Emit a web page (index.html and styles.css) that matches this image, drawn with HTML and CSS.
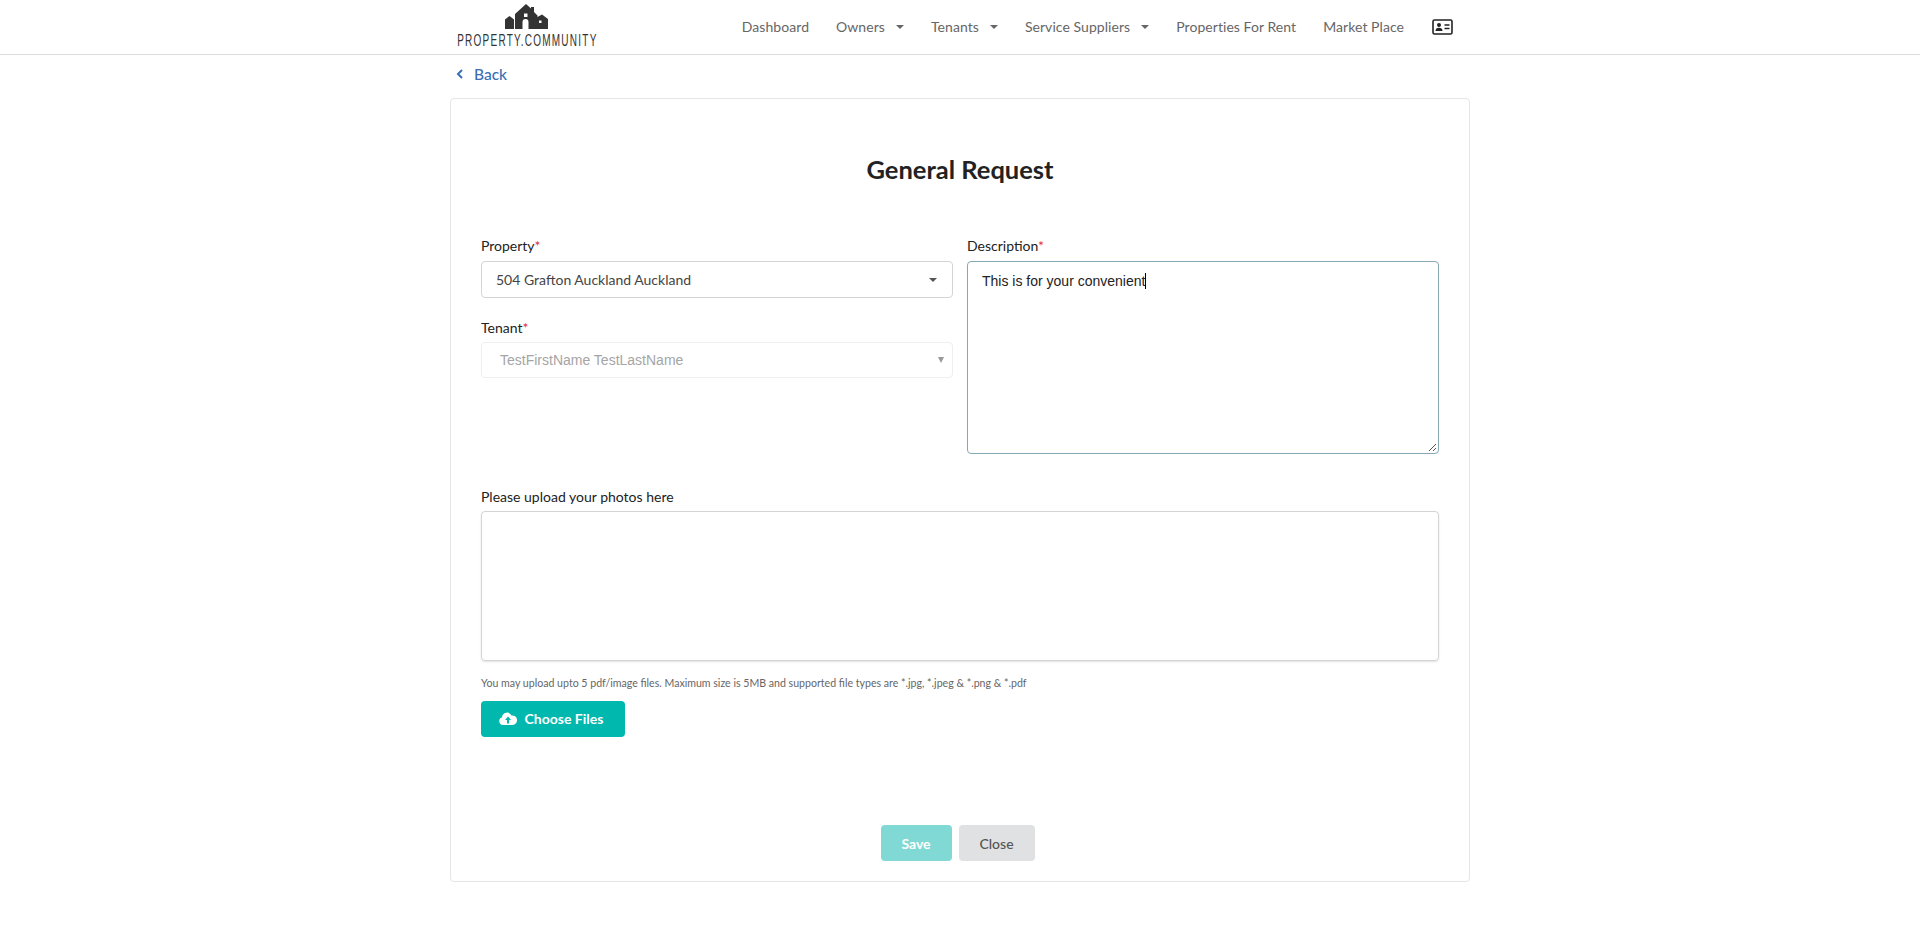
FILE: index.html
```html
<!DOCTYPE html>
<html lang="en">
<head>
<meta charset="utf-8">
<title>General Request</title>
<link rel="stylesheet" href="styles.css">
</head>
<body>
<header class="topbar">
  <div class="topbar-inner">
    <a class="logo" href="#">
      <svg class="logo-mark" viewBox="1 0 50 27" width="50" height="27" aria-hidden="true">
        <path fill="#333" d="M4 16.5 8.5 13 13 16.5V26H4Z"/>
        <path fill="#333" d="M14 11 25 1 30 5.500V4h3v5l3.500 3.500V14L41 11.500 47 16V26H14Z"/>
        <path fill="#fff" d="M23 10.500h3.500V14H23ZM21.500 19a3 3 0 0 1 6 0v7h-6ZM38 17.500h2.500V20H38Z"/>
      </svg>
      <span class="logo-text">PROPERTY.COMMUNITY</span>
    </a>
    <nav class="nav">
      <a class="nav-item" href="#">Dashboard</a>
      <a class="nav-item" href="#">Owners<i class="caret"></i></a>
      <a class="nav-item" href="#">Tenants<i class="caret"></i></a>
      <a class="nav-item" href="#">Service Suppliers<i class="caret"></i></a>
      <a class="nav-item" href="#">Properties For Rent</a>
      <a class="nav-item" href="#">Market Place</a>
      <a class="nav-item nav-icon" href="#" aria-label="Profile">
        <svg viewBox="0 0 21 16" width="21" height="16" aria-hidden="true">
          <rect x="1" y="1" width="19" height="14" rx="1.500" fill="#fff" stroke="#222" stroke-width="1.600"/>
          <circle cx="7" cy="6" r="2" fill="#222"/>
          <path fill="#222" d="M3.500 12c0-2.200 1.500-3.300 3.500-3.300s3.500 1.100 3.500 3.300Z"/>
          <path stroke="#222" stroke-width="1.300" d="M12.500 6h5M12.500 9.500h5"/>
        </svg>
      </a>
    </nav>
  </div>
</header>

<main class="page">
  <a class="back" href="#">
    <svg viewBox="0 0 8 10" width="8" height="10" aria-hidden="true"><path d="M6 1 2 5l4 4" fill="none" stroke="#3a6fb5" stroke-width="2"/></svg>
    <span>Back</span>
  </a>

  <section class="card">
    <h1 class="title">General Request</h1>
    <div class="form-grid">
      <div class="col">
        <div class="field">
          <label class="label">Property<span class="req">*</span></label>
          <div class="select">
            <span>504 Grafton Auckland Auckland</span>
            <i class="select-caret"></i>
          </div>
        </div>
        <div class="field field-tenant">
          <label class="label">Tenant<span class="req">*</span></label>
          <div class="select select-disabled">
            <span>TestFirstName TestLastName</span>
            <i class="select-caret"></i>
          </div>
        </div>
      </div>
      <div class="col">
        <div class="field">
          <label class="label">Description<span class="req">*</span></label>
          <div class="textarea">
            <span>This is for your convenient</span><i class="text-cursor"></i>
            <svg class="grip" viewBox="0 0 9 9" width="9" height="9" aria-hidden="true"><path d="M1 8 8 1M5 8 8 5" stroke="#555" stroke-width="1"/></svg>
          </div>
        </div>
      </div>
    </div>

    <div class="upload">
      <label class="label">Please upload your photos here</label>
      <div class="dropzone"></div>
      <p class="hint">You may upload upto 5 pdf/image files. Maximum size is 5MB and supported file types are *.jpg, *.jpeg &amp; *.png &amp; *.pdf</p>
      <button class="btn btn-choose" type="button">
        <svg viewBox="0 0 18 13" width="18" height="13" aria-hidden="true">
          <path fill="#fff" d="M4 13a4 4 0 0 1-1-7.800A5 5 0 0 1 12.500 3.500 4.800 4.800 0 0 1 14 13Z"/>
          <path fill="#00b8ad" d="M9 4.500 12 8h-2v3.500H8V8H6Z"/>
        </svg>
        <span>Choose Files</span>
      </button>
    </div>

    <div class="actions">
      <button class="btn btn-save" type="button">Save</button>
      <button class="btn btn-close" type="button">Close</button>
    </div>
  </section>
</main>
</body>
</html>
```

FILE: styles.css
```css
* { box-sizing: border-box; }
html, body { margin: 0; padding: 0; }
body {
  background: #fff;
  color: #222;
  font-family: Lato, "Liberation Sans", sans-serif;
  font-size: 14px;
  height: 930px;
  overflow: hidden;
}
a { text-decoration: none; color: inherit; }

.topbar {
  height: 55px;
  border-bottom: 1px solid #ddd;
}
.topbar-inner {
  width: 1020px;
  margin: 0 auto;
  height: 54px;
  display: flex;
  justify-content: space-between;
  padding: 0 2px 0 6px;
}
.logo {
  display: flex;
  flex-direction: column;
  align-items: center;
  width: 142px;
  padding-top: 3px;
}
.logo-mark { display: block; margin-bottom: 4px; flex: none; }
.logo-text {
  font-family: "Liberation Sans", sans-serif;
  font-size: 16px;
  line-height: 14px;
  letter-spacing: 2px;
  color: #333;
  white-space: nowrap;
  transform: scaleX(0.625);
}
.nav {
  display: flex;
  align-items: center;
  gap: 27px;
  padding: 0 15px 0 0;
}
.nav-item {
  color: #666;
  font-size: 14px;
  letter-spacing: 0.06px;
  line-height: 20px;
  display: flex;
  align-items: center;
}
.nav-icon { margin-left: 1px; }
.caret {
  width: 0;
  height: 0;
  margin-left: 11px;
  border-left: 4px solid transparent;
  border-right: 4px solid transparent;
  border-top: 4px solid #666;
}

.page {
  width: 1020px;
  margin: 0 auto;
}
.back {
  display: flex;
  align-items: center;
  gap: 10px;
  height: 43px;
  padding: 0 0 5px 6px;
  color: #3a6fb5;
  font-size: 15.5px;
  font-weight: 500;
}

.card {
  height: 784px;
  border: 1px solid #e5e5e5;
  border-radius: 4px;
  padding: 55px 30px 0;
}
.title {
  margin: 0;
  text-align: center;
  font-size: 25.5px;
  line-height: 30px;
  font-weight: 700;
  color: #222;
}
.form-grid {
  display: grid;
  grid-template-columns: 472px 472px;
  column-gap: 14px;
  margin-top: 52px;
}
.label {
  display: block;
  height: 20px;
  line-height: 20px;
  margin-bottom: 5px;
  font-size: 14px;
  font-weight: 400;
  color: #222;
}
.req { color: #e0284f; }
.field-tenant { margin-top: 20px; }

.select {
  height: 37px;
  border: 1px solid #d4d4d5;
  border-radius: 4px;
  padding: 0 14px;
  display: flex;
  align-items: center;
  justify-content: space-between;
  color: #444;
  font-size: 14px;
}
.select-caret {
  width: 0;
  height: 0;
  margin-right: 1px;
  border-left: 4px solid transparent;
  border-right: 4px solid transparent;
  border-top: 4px solid #555;
}
.select-disabled {
  height: 36px;
  margin-top: -1px;
  border-color: #eee;
  padding: 0 7px 0 18px;
  color: #a5a5a5;
  font-family: "Liberation Sans", sans-serif;
}
.select-disabled .select-caret {
  border-left-width: 3px;
  border-right-width: 3px;
  border-top: 6px solid #999;
}

.textarea {
  position: relative;
  height: 193px;
  border: 1px solid #85a8b4;
  border-radius: 4px;
  padding: 11px 14px;
  font-family: "Liberation Sans", sans-serif;
  font-size: 14px;
  line-height: 17px;
  color: #222;
}
.text-cursor {
  display: inline-block;
  width: 1px;
  height: 16px;
  background: #000;
  vertical-align: -3px;
}
.grip {
  position: absolute;
  right: 1px;
  bottom: 1px;
}

.upload { margin-top: 33px; }
.upload .label { margin-bottom: 4px; }
.dropzone {
  height: 150px;
  border: 1px solid #d4d4d5;
  border-radius: 4px;
  box-shadow: 0 1px 2px rgba(0, 0, 0, 0.12);
}
.hint {
  margin: 15px 0 11px;
  font-size: 10.6px;
  line-height: 14px;
  color: #666;
}
.btn {
  border: 0;
  border-radius: 4px;
  height: 36px;
  font-family: Lato, "Liberation Sans", sans-serif;
  font-size: 14px;
  padding: 0;
}
.btn-choose {
  width: 144px;
  padding: 0 4px 2px 0;
  background: #00b8ad;
  color: #fff;
  font-weight: 700;
  display: flex;
  align-items: center;
  justify-content: center;
  gap: 8px;
}
.actions {
  display: flex;
  justify-content: center;
  gap: 7px;
  margin-top: 88px;
  padding-right: 5px;
}
.btn-save {
  width: 71px;
  background: #80d9d4;
  color: #fff;
  font-weight: 700;
}
.btn-close {
  width: 76px;
  background: #e0e1e2;
  color: #555;
  font-weight: 500;
}
```
